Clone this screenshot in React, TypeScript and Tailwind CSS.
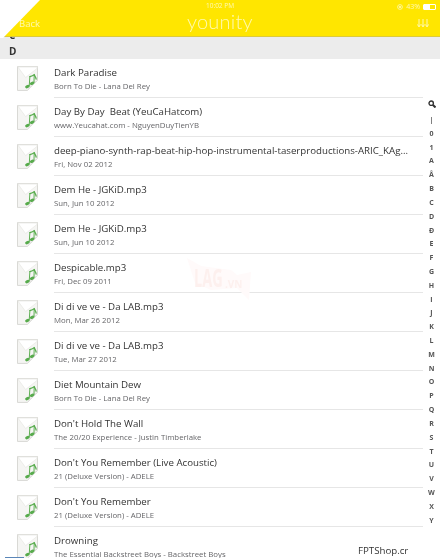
import React from 'react';

const SONGS = [
    { title: 'Dark Paradise', sub: 'Born To Die - Lana Del Rey' },
    { title: 'Day By Day  Beat (YeuCaHatcom)', sub: 'www.Yeucahat.com - NguyenDuyTienYB' },
    { title: 'deep-piano-synth-rap-beat-hip-hop-instrumental-taserproductions-ARIC_KAg...', sub: 'Fri, Nov 02 2012' },
    { title: 'Dem He - JGKiD.mp3', sub: 'Sun, Jun 10 2012' },
    { title: 'Dem He - JGKiD.mp3', sub: 'Sun, Jun 10 2012' },
    { title: 'Despicable.mp3', sub: 'Fri, Dec 09 2011' },
    { title: 'Di di ve ve - Da LAB.mp3', sub: 'Mon, Mar 26 2012' },
    { title: 'Di di ve ve - Da LAB.mp3', sub: 'Tue, Mar 27 2012' },
    { title: 'Diet Mountain Dew', sub: 'Born To Die - Lana Del Rey' },
    { title: "Don't Hold The Wall", sub: 'The 20/20 Experience - Justin Timberlake' },
    { title: "Don't You Remember (Live Acoustic)", sub: '21 (Deluxe Version) - ADELE' },
    { title: "Don't You Remember", sub: '21 (Deluxe Version) - ADELE' },
    { title: 'Drowning', sub: 'The Essential Backstreet Boys - Backstreet Boys' },
];

const INDEX = ['|', '0', '1', 'A', 'Â', 'B', 'C', 'D', 'Đ', 'E', 'F', 'G', 'H', 'I', 'J', 'K', 'L', 'M', 'N', 'O', 'P', 'Q', 'R', 'S', 'T', 'U', 'V', 'W', 'X', 'Y'];

const FileThumb = () => (
    <svg width="21" height="25" viewBox="0 0 22 26" className="shrink-0">
        <path d="M0.5 0.5H21.5V15L11 25.5H0.5Z" fill="#f5f5f3" stroke="#d6d6d2" strokeWidth="1" />
        <path d="M1 1L9 12L21 2.5V1Z" fill="#ffffff" stroke="#e8e8e5" strokeWidth="0.8" />
        <path d="M21.5 15L14 17L11 25.5Z" fill="#e6e6e3" />
        <g fill="none" stroke="#57ab4c" strokeWidth="1" strokeLinecap="round">
            <path d="M13.5 11L12.8 21" />
            <path d="M18 9L17.8 17.5" />
            <path d="M13.5 11C15 10.5 16.5 10 18 9C18.5 10.5 19.8 11.5 20 13.5" strokeWidth="1.4" />
        </g>
        <ellipse cx="10.8" cy="21.5" rx="2.4" ry="1.6" fill="#57ab4c" transform="rotate(-25 10.8 21.5)" />
        <ellipse cx="15.8" cy="18" rx="2.4" ry="1.6" fill="#57ab4c" transform="rotate(-25 15.8 18)" />
    </svg>
);

const SongRow = ({ title, sub }: { title: string; sub: string }) => (
    <div className="flex h-[39px] items-center pl-[17px]">
        <FileThumb />
        <div className="ml-[16px] flex h-full w-[369px] min-w-0 flex-col justify-center border-b border-[#e6e6e6] pt-[2px]">
            <div className="whitespace-pre text-[9.7px] leading-[14px] text-[#333333]">{title}</div>
            <div className="whitespace-pre text-[7.8px] leading-[12px] text-[#666669]">{sub}</div>
        </div>
    </div>
);

const App: React.FC = () => {
    return (
        <div
            className="relative h-[558px] w-[440px] overflow-hidden bg-white blur-[0.35px]"
            style={{ fontFamily: '"Open Sans", sans-serif' }}
        >
            {/* Top bar */}
            <div className="relative z-10 flex h-[37px] flex-col border-b border-[#dcca3c] bg-[#ffe600] text-[#fff9b0]">
                <div className="relative flex h-[12px] items-center justify-center text-[6.5px]">
                    <span>10:02 PM</span>
                    <div className="absolute right-[4px] top-[2px] flex items-center gap-[3px]">
                        <svg width="6" height="6" viewBox="0 0 6 6" fill="none" stroke="#fff9b0" strokeWidth="0.8">
                            <circle cx="3" cy="3" r="2.4" />
                            <circle cx="3" cy="3" r="0.8" fill="#fff9b0" />
                        </svg>
                        <span className="text-[7px]">43%</span>
                        <div className="h-[6px] w-[13px] rounded-[1px] border border-white">
                            <div className="h-full w-[6px] bg-white" />
                        </div>
                    </div>
                </div>
                <div className="relative flex h-[24px] items-center justify-between pl-[19px] pr-[11px] pb-[1px]">
                    <span className="mt-[1px] text-[9.5px]">Back</span>
                    <span
                        className="absolute left-[187px] top-[-3px] text-[20px] font-light leading-[24px] tracking-[0.2px]"
                        style={{ fontFamily: 'Lato, sans-serif' }}
                    >
                        younity
                    </span>
                    <svg width="12" height="9" viewBox="0 0 12 9" fill="none" stroke="#fff9b0" strokeWidth="1">
                        <path d="M2 0V7M0.5 5.5L2 8L3.5 5.5M6 0V7M4.5 5.5L6 8L7.5 5.5M10 0V7M8.5 5.5L10 8L11.5 5.5" />
                    </svg>
                </div>
            </div>

            {/* Corner cut of the top bar */}
            <svg width="41" height="38" viewBox="0 0 41 38" className="absolute left-0 top-0 z-20">
                <path d="M0 0H40L3 38H0Z" fill="white" />
            </svg>

            {/* Section header */}
            <div className="relative flex h-[22px] items-center bg-[#ececec] pl-[9px] pt-[7px] text-[10px] font-bold text-[#333333]">
                <div className="absolute left-[9px] top-0 h-[3px] w-[8px] overflow-hidden">
                    <span className="absolute bottom-0 leading-none">C</span>
                </div>
                D
            </div>

            <div>
                {SONGS.map((song, i) => (
                    <SongRow key={i} title={song.title} sub={song.sub} />
                ))}
            </div>

            {/* Alphabet index */}
            <div className="absolute left-[423px] top-[97px] flex w-[17px] flex-col items-center text-[7px] font-bold text-[#555555]">
                <svg width="8" height="8" viewBox="0 0 8 8" fill="none" stroke="#333333" className="mt-[3px] mb-[5px]" strokeWidth="1.4">
                    <circle cx="3.2" cy="3.2" r="2.2" />
                    <path d="M5 5L7.5 7.5" strokeWidth="2" />
                </svg>
                {INDEX.map((letter, i) => (
                    <span key={i} className="h-[13.82px] leading-[13.82px]">
                        {letter}
                    </span>
                ))}
            </div>

            {/* Watermarks */}
            <div className="pointer-events-none absolute left-[187px] top-[258px] h-[42px] w-[65px] font-bold text-[#fdf0ee]">
                <svg width="65" height="42" viewBox="0 0 65 42" className="absolute inset-0">
                    <path d="M0 0L14 8L44 12L50 17L64 14L62 42L50 30L24 32L8 25Z" fill="#fffafa" />
                </svg>
                <div className="absolute left-[7px] top-[7px] flex items-end leading-none">
                    <span className="inline-block w-[29px] origin-left scale-x-[0.58] whitespace-pre text-[25px]">LAG</span>
                    <span className="mb-[1px] ml-[2px] text-[10px]">.VN</span>
                </div>
            </div>
            <div className="absolute left-[358px] top-[543px] text-[9.7px] leading-[16px] text-[#333333]">FPTShop.cr</div>
            <div className="absolute bottom-0 left-[5px] h-[1px] w-[19px] bg-[#5a86b8]" />
        </div>
    );
};

export default App;
